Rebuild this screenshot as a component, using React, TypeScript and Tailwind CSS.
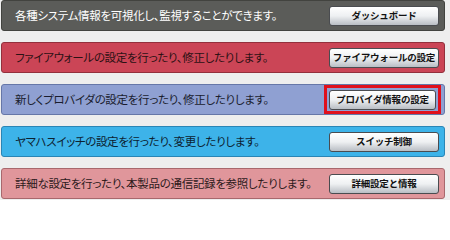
import React from 'react'

type Row = {
  text: string
  label: string
  bar: string
  ink: string
  active?: boolean
}

const rows: Row[] = [
  {
    text: '各種システム情報を可視化し、監視することができます。',
    label: 'ダッシュボード',
    bar: 'bg-[#5b5c59] border-[#42433f]',
    ink: 'text-white',
  },
  {
    text: 'ファイアウォールの設定を行ったり、修正したりします。',
    label: 'ファイアウォールの設定',
    bar: 'bg-[#cb4556] border-[#93303c]',
    ink: 'text-[#2b1114]',
  },
  {
    text: '新しくプロバイダの設定を行ったり、修正したりします。',
    label: 'プロバイダ情報の設定',
    bar: 'bg-[#8fa0d2] border-[#6677a8]',
    ink: 'text-[#1a1d2e]',
    active: true,
  },
  {
    text: 'ヤマハスイッチの設定を行ったり、変更したりします。',
    label: 'スイッチ制御',
    bar: 'bg-[#3db3e9] border-[#2a85b5]',
    ink: 'text-[#0c2231]',
  },
  {
    text: '詳細な設定を行ったり、本製品の通信記録を参照したりします。',
    label: '詳細設定と情報',
    bar: 'bg-[#e0969b] border-[#a8686d]',
    ink: 'text-[#2d1a1b]',
  },
]

function MenuButton({ label, narrow }: { label: string; narrow?: boolean }) {
  return (
    <button
      className={`flex h-[20px] shrink-0 items-center justify-center whitespace-nowrap rounded-[3px] border border-[#4a4c50] bg-gradient-to-b from-white via-[#eef0f2] to-[#b9bec4] text-[9.5px] font-bold tracking-[-0.2px] text-[#111] shadow-[inset_0_1px_0_#fff] ${
        narrow ? 'w-[107px]' : 'w-[110px]'
      }`}
      style={{ fontFeatureSettings: 'normal' }}
    >
      {label}
    </button>
  )
}

export default function App() {
  return (
    <div
      className="flex h-[200px] w-[450px] flex-col gap-[11px] bg-[#eeeeee] pl-[1px] pr-[5px]"
      style={{
        fontFamily: '"Noto Sans CJK JP", "Noto Sans", sans-serif',
        fontFeatureSettings: '"palt"',
      }}
    >
      {rows.map((row) => (
        <div
          key={row.label}
          className={`flex h-[31px] shrink-0 items-center justify-between rounded-[3px] border pl-[13px] ${row.bar}`}
        >
          <span className={`whitespace-nowrap text-[11.5px] leading-none tracking-[-0.3px] ${row.ink}`}>
            {row.text}
          </span>
          {row.active ? (
            <div className="mr-[3px] flex h-[29px] shrink-0 items-center border-[3px] border-[#e0101c] px-[2px]">
              <MenuButton label={row.label} narrow />
            </div>
          ) : (
            <div className="mr-[5px] shrink-0">
              <MenuButton label={row.label} />
            </div>
          )}
        </div>
      ))}
    </div>
  )
}
